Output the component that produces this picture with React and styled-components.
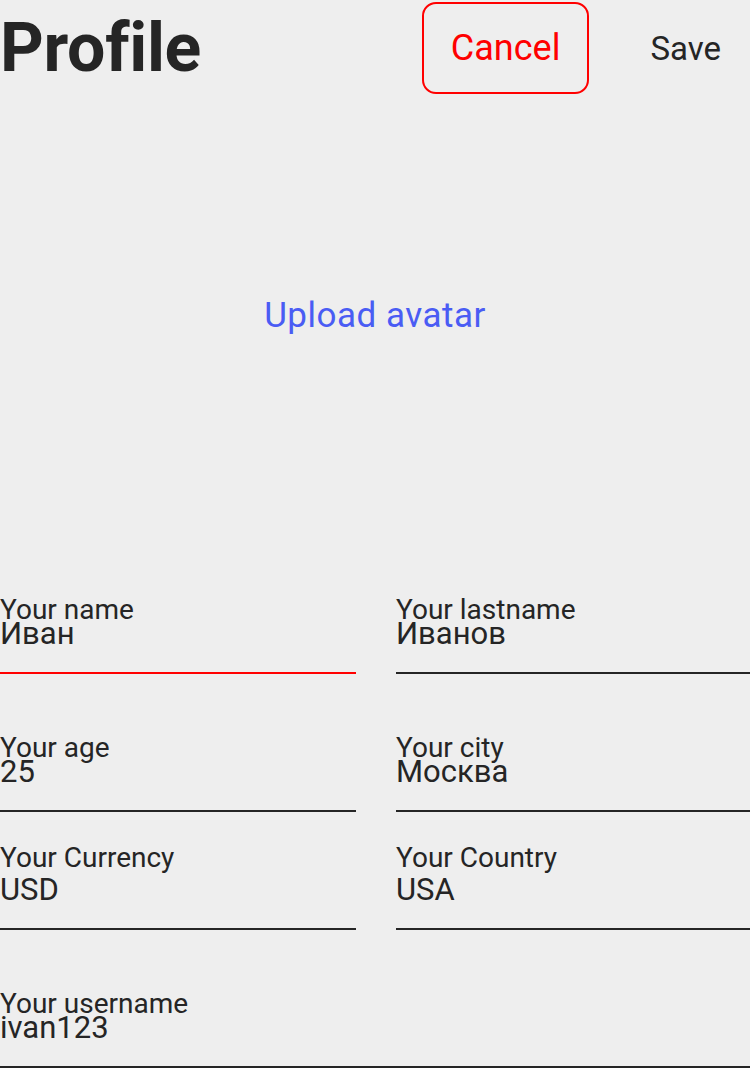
import React from "react"
import styled, { createGlobalStyle } from "styled-components"

const textColor = "#252525"
const accentRed = "#ff0000"
const linkBlue = "#4a5cf4"
const bgColor = "#eeeeee"

const GlobalStyle = createGlobalStyle`
	html, body {
		margin: 0;
		padding: 0;
		background: ${bgColor};
		font-family: Roboto, "Noto Sans", "Liberation Sans", sans-serif;
		color: ${textColor};
	}
	* {
		box-sizing: border-box;
	}
`

const Page = styled.div`
	width: 750px;
	min-height: 1068px;
	background: ${bgColor};
	overflow: hidden;
`

const Header = styled.header`
	display: flex;
	justify-content: space-between;
	align-items: center;
	height: 96px;
`

const Title = styled.h1`
	margin: 0;
	font-size: 68px;
	font-weight: 700;
	line-height: 1;
	letter-spacing: -0.3px;
`

const Actions = styled.div`
	display: flex;
	align-items: center;
	gap: 32px;
`

const ActionButton = styled.button`
	height: 92px;
	padding: 0 27px;
	border: 2px solid ${(p) => (p.$outlined ? accentRed : "transparent")};
	border-radius: 14px;
	background: transparent;
	color: ${(p) => (p.$outlined ? accentRed : textColor)};
	font-family: Roboto, "Noto Sans", sans-serif;
	font-size: ${(p) => (p.$outlined ? "36px" : "33px")};
	cursor: pointer;
`

const AvatarArea = styled.div`
	display: flex;
	align-items: center;
	justify-content: center;
	height: 440px;
`

const UploadLink = styled.button`
	border: none;
	background: none;
	padding: 0;
	color: ${linkBlue};
	font-family: Roboto, "Noto Sans", sans-serif;
	font-size: 35px;
	line-height: 40px;
	letter-spacing: 0.5px;
	cursor: pointer;
`

const Form = styled.form`
	display: grid;
	grid-template-columns: 356px 1fr;
	column-gap: 40px;
`

const Field = styled.label`
	display: block;
	grid-column: ${(p) => (p.$wide ? "1 / -1" : "auto")};
	padding-top: ${(p) => (p.$picker ? "34px" : "62px")};
	padding-bottom: 27px;
	border-bottom: 2px solid ${(p) => (p.$focused ? accentRed : textColor)};
`

const FieldLabel = styled.span`
	display: block;
	height: 24px;
	font-size: 28px;
	line-height: 24px;
	white-space: nowrap;
`

const FieldInput = styled.input`
	display: block;
	width: 100%;
	height: 24px;
	margin-top: ${(p) => (p.$picker ? "7px" : "-1px")};
	padding: 0;
	border: none;
	outline: none;
	background: transparent;
	color: ${textColor};
	font-family: Roboto, "Noto Sans", sans-serif;
	font-size: 31px;
`

const fields = [
	{ label: "Your name", value: "Иван", focused: true },
	{ label: "Your lastname", value: "Иванов" },
	{ label: "Your age", value: "25" },
	{ label: "Your city", value: "Москва" },
	{ label: "Your Currency", value: "USD", picker: true },
	{ label: "Your Country", value: "USA", picker: true },
	{ label: "Your username", value: "ivan123", wide: true },
]

const App = () => {
	return (
		<Page>
			<GlobalStyle />
			<Header>
				<Title>Profile</Title>
				<Actions>
					<ActionButton $outlined>Cancel</ActionButton>
					<ActionButton>Save</ActionButton>
				</Actions>
			</Header>
			<AvatarArea>
				<UploadLink>Upload avatar</UploadLink>
			</AvatarArea>
			<Form>
				{fields.map((f) => (
					<Field key={f.label} $focused={f.focused} $picker={f.picker} $wide={f.wide}>
						<FieldLabel>{f.label}</FieldLabel>
						<FieldInput $picker={f.picker} value={f.value} readOnly />
					</Field>
				))}
			</Form>
		</Page>
	)
}

export default App
